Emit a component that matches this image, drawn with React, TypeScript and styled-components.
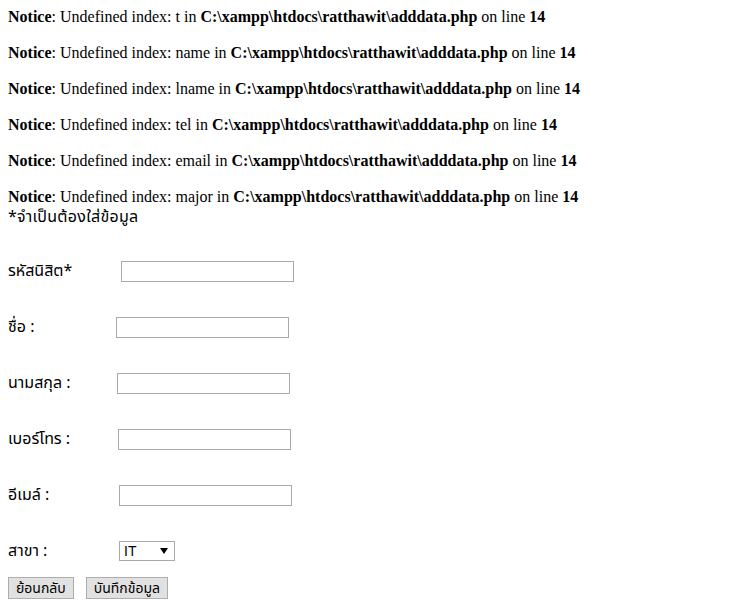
import styled, { createGlobalStyle } from "styled-components";

const GlobalStyle = createGlobalStyle`
  html, body {
    margin: 0;
    padding: 0;
    background: #ffffff;
  }
  body {
    margin: 8px;
    font-family: "Liberation Serif", "Times New Roman", serif;
    font-size: 16px;
    line-height: 18px;
    color: #000000;
  }
`;

const thaiFont = `Tahoma, "Noto Sans Thai", "Noto Sans", "DejaVu Sans", sans-serif`;

const Notices = styled.div`
  display: flex;
  flex-direction: column;
  gap: 18px;
`;

const NoticeLine = styled.div`
  height: 18px;
  white-space: nowrap;
  b {
    font-weight: bold;
  }
`;

const Required = styled.div`
  margin-top: 2px;
  font-family: ${thaiFont};
  font-size: 16px;
  letter-spacing: 0.3px;
  height: 18px;
`;

const Form = styled.form`
  margin-top: 34px;
  display: flex;
  flex-direction: column;
  gap: 34px;
`;

const Row = styled.div`
  display: flex;
  align-items: center;
  height: 22px;
`;

const Label = styled.label<{ $w: number }>`
  width: ${(p) => p.$w}px;
  font-family: ${thaiFont};
  font-size: 16px;
  white-space: nowrap;
`;

const TextInput = styled.input`
  box-sizing: border-box;
  width: 173px;
  height: 21px;
  border: 1px solid #a9a9a9;
  padding: 1px 2px;
  margin: 0;
  font-size: 13px;
  background: #fff;
  outline: none;
`;

const Select = styled.select`
  box-sizing: border-box;
  appearance: none;
  width: 56px;
  height: 20px;
  border: 1px solid #a9a9a9;
  border-radius: 0;
  padding: 0 0 0 4px;
  margin: 0;
  font-family: Arial, "Liberation Sans", sans-serif;
  font-size: 14px;
  color: #000;
  background: #fff
    url("data:image/svg+xml;utf8,<svg xmlns='http://www.w3.org/2000/svg' width='8' height='6'><path d='M0 0h8L4 6z' fill='black'/></svg>")
    no-repeat right 6px center;
`;

const Buttons = styled.div`
  margin-top: 15px;
  display: flex;
  gap: 12px;
`;

const Button = styled.button`
  box-sizing: border-box;
  height: 22px;
  padding: 0 7px;
  background: #e1e1e1;
  border: 1px solid #adadad;
  border-radius: 0;
  font-family: ${thaiFont};
  font-size: 14px;
  color: #000;
  cursor: pointer;
`;

const missing = ["t", "name", "lname", "tel", "email", "major"];

const fields = [
  { label: "รหัสนิสิต*", w: 113 },
  { label: "ชื่อ :", w: 108 },
  { label: "นามสกุล :", w: 109 },
  { label: "เบอร์โทร :", w: 110 },
  { label: "อีเมล์ :", w: 111 },
];

export default function App() {
  return (
    <>
      <GlobalStyle />
      <Notices>
        {missing.map((key) => (
          <NoticeLine key={key}>
            <b>Notice</b>: Undefined index: {key} in{" "}
            <b>C:\xampp\htdocs\ratthawit\adddata.php</b> on line <b>14</b>
          </NoticeLine>
        ))}
      </Notices>
      <Required>*จำเป็นต้องใส่ข้อมูล</Required>
      <Form onSubmit={(e) => e.preventDefault()}>
        {fields.map((f) => (
          <Row key={f.label}>
            <Label $w={f.w}>{f.label}</Label>
            <TextInput type="text" />
          </Row>
        ))}
        <Row>
          <Label $w={111}>สาขา :</Label>
          <Select defaultValue="IT">
            <option value="IT">IT</option>
          </Select>
        </Row>
      </Form>
      <Buttons>
        <Button type="button">ย้อนกลับ</Button>
        <Button type="button">บันทึกข้อมูล</Button>
      </Buttons>
    </>
  );
}
